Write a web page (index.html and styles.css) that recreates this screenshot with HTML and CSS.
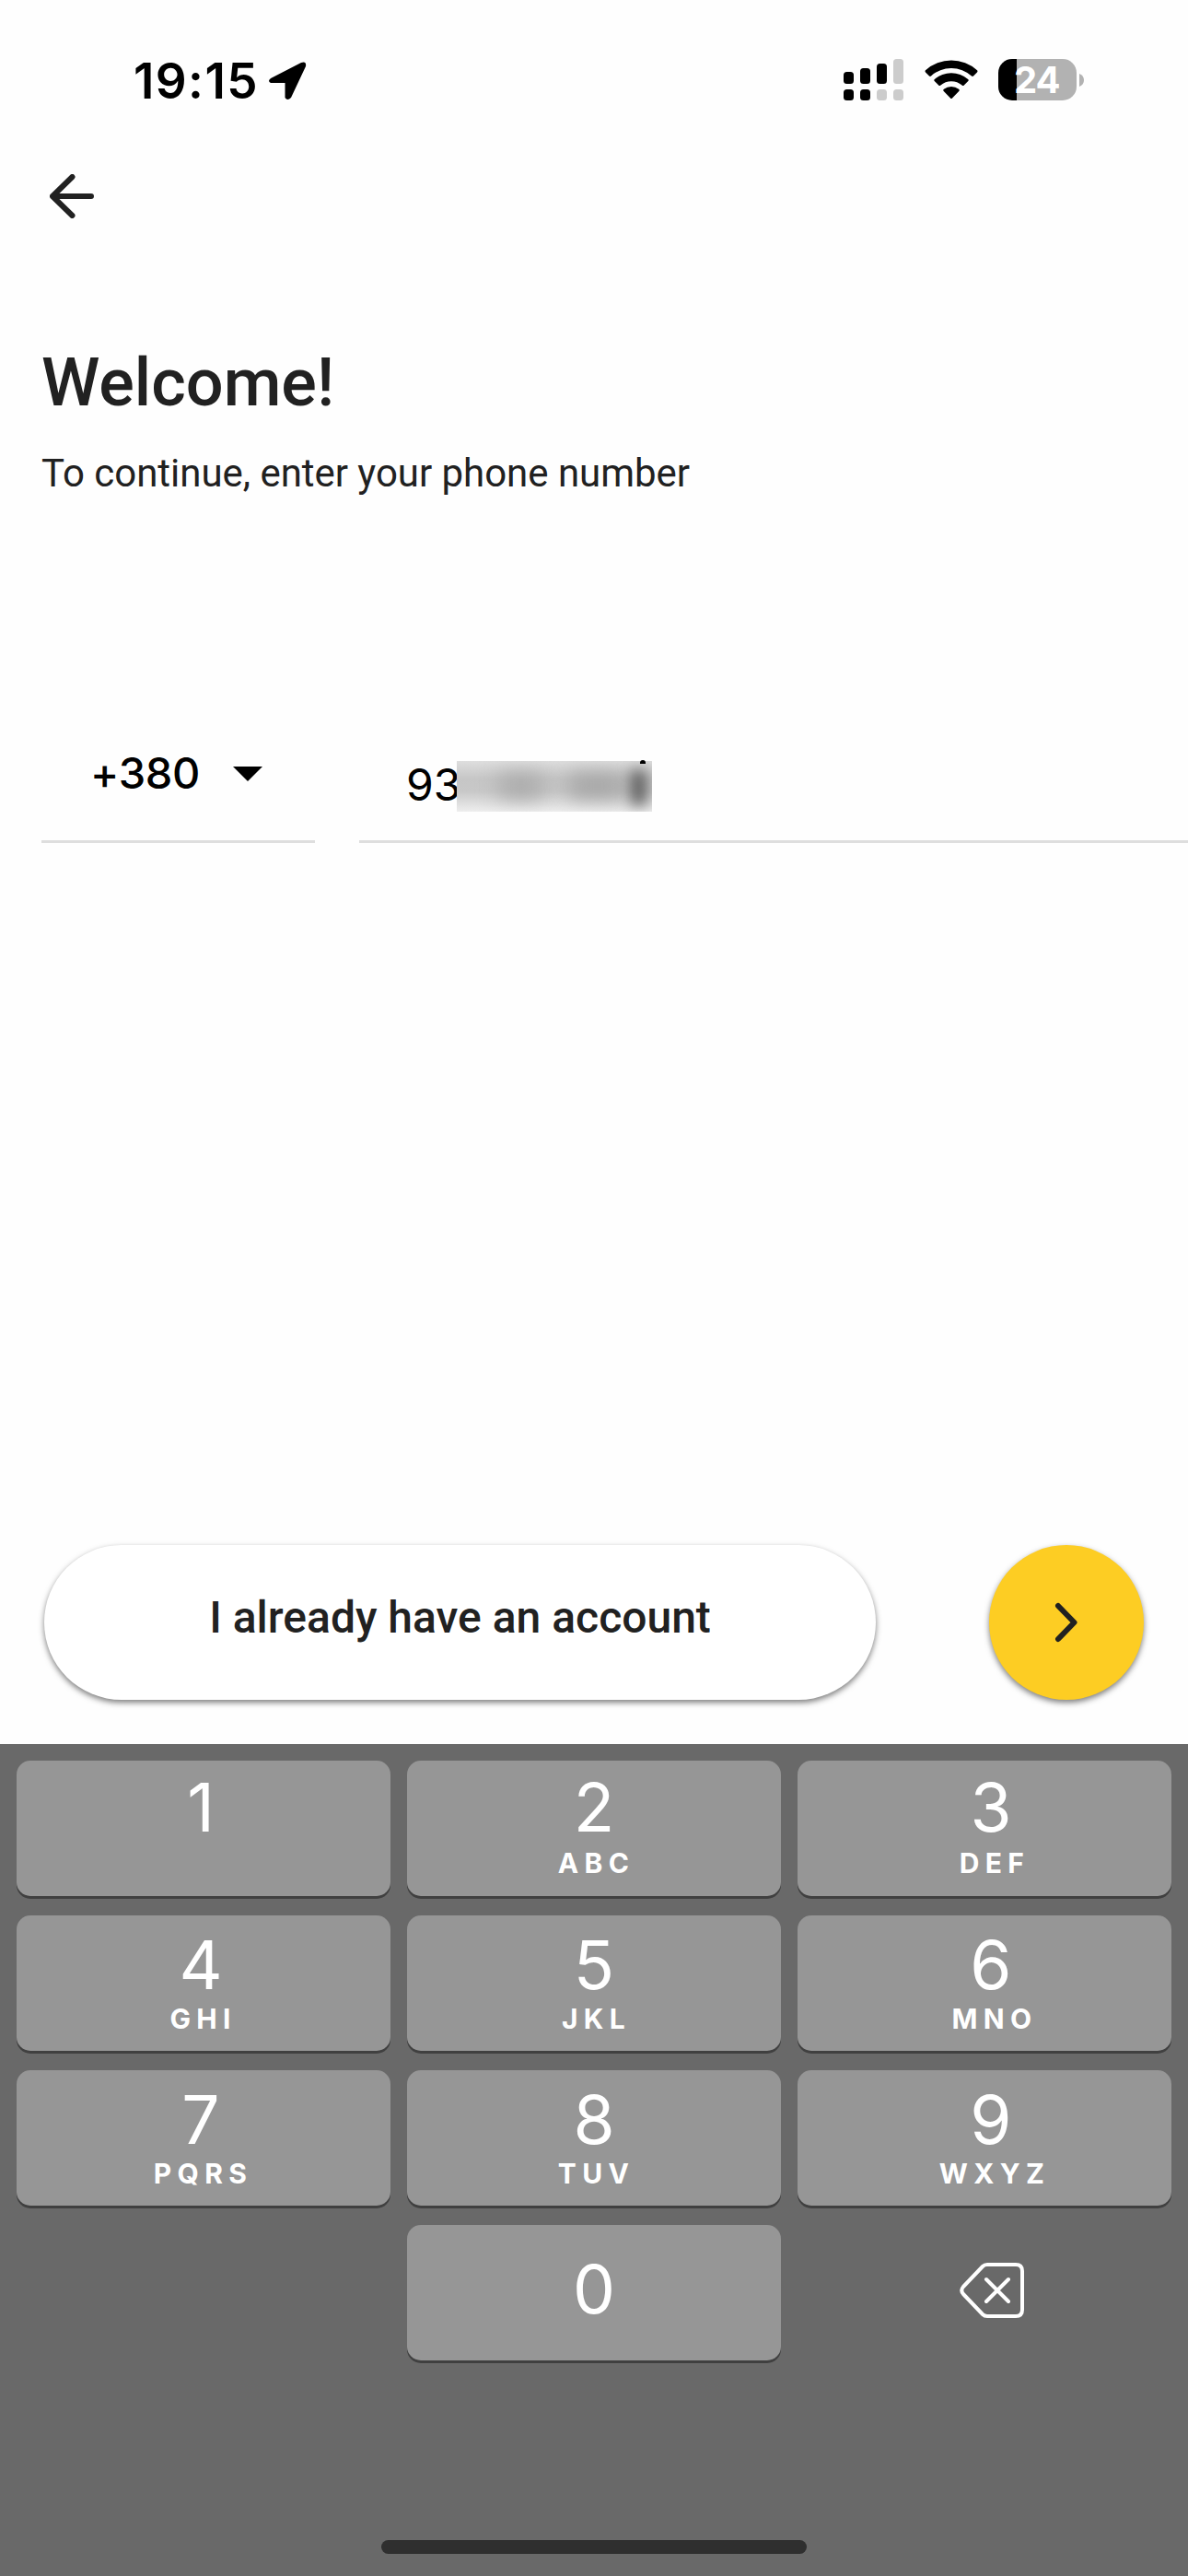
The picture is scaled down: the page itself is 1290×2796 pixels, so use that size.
FILE: index.html
```html
<!DOCTYPE html>
<html lang="en">
<head>
    <meta charset="UTF-8">
    <meta name="viewport" content="width=device-width, initial-scale=1.0">
    <title>Welcome</title>
    <link rel="stylesheet" href="styles.css">
</head>
<body>
    <div class="status-bar">
        <span class="time">19:15</span>
        <svg class="location" width="42" height="42" viewBox="0 0 42 42">
            <path d="M3 18 L36 1 Q42 -1 41 5 L25 39 Q21 43 18.5 39 L18.5 23 L3 23 Q-1 21 3 18 Z"/>
        </svg>
        <svg class="signal" width="65" height="45" viewBox="0 0 65 45">
            <rect x="0" y="14" width="11" height="13" rx="3.5"/>
            <rect x="18" y="10" width="11" height="17" rx="3.5"/>
            <rect x="36" y="5" width="11" height="22" rx="3.5"/>
            <rect class="off" x="54" y="0" width="11" height="27" rx="3.5"/>
            <rect x="0" y="33" width="11" height="12" rx="3.5"/>
            <rect x="18" y="33" width="11" height="12" rx="3.5"/>
            <rect class="off" x="36" y="33" width="11" height="12" rx="3.5"/>
            <rect class="off" x="54" y="33" width="11" height="12" rx="3.5"/>
        </svg>
        <svg class="wifi" width="58" height="43" viewBox="0 0 58 43">
            <path d="M1 13.500 Q0 12.300 1 11.300 A42 42 0 0 1 57 11.300 Q58 12.300 57 13.500 L53 17.500 Q52 18.300 51 17.500 A32.500 32.500 0 0 0 7 17.500 Q6 18.300 5 17.500 Z"/>
            <path d="M10.700 23 Q9.700 22 10.900 21 A27.500 27.500 0 0 1 47.100 21 Q48.300 22 47.300 23 L42.800 27.600 Q41.800 28.600 40.600 27.600 A18 18 0 0 0 17.400 27.600 Q16.200 28.600 15.200 27.600 Z"/>
            <path d="M20.500 33.800 Q19.600 32.700 20.900 31.800 A13.500 13.500 0 0 1 37.100 31.800 Q38.400 32.700 37.500 33.800 L30 41.500 Q29 42.500 28 41.500 Z"/>
        </svg>
        <div class="battery">24</div>
        <svg class="battery-tip" width="5" height="14" viewBox="0 0 5 14">
            <path d="M0 0 Q5 2 5 7 Q5 12 0 14 Z"/>
        </svg>
    </div>

    <div class="nav">
        <svg width="48" height="48" viewBox="0 0 48 48">
            <path d="M45 24 H3 M24.500 3 L3 24 L24.500 45"/>
        </svg>
    </div>

    <h1>Welcome!</h1>
    <p class="subtitle">To continue, enter your phone number</p>

    <div class="phone">
        <div class="code">
            <span>+380</span>
            <svg width="32" height="16" viewBox="0 0 32 16"><path d="M0 0 H32 L16 16 Z"/></svg>
        </div>
        <div class="number">
            <span>93</span>
            <!-- hidden part of the number -->
            <div class="hidden">
                <i class="smudge one"></i>
                <i class="smudge two"></i>
                <i class="smudge three"></i>
            </div>
            <i class="dot"></i>
        </div>
    </div>

    <div class="actions">
        <div class="account">I already have an account</div>
        <div class="next">
            <svg width="26" height="44" viewBox="0 0 26 44"><path d="M4 4 L21.500 22 L4 40"/></svg>
        </div>
    </div>

    <div class="keyboard">
        <div class="keys">
            <div class="key left top"><b>1</b></div>
            <div class="key top"><b>2</b><span>ABC</span></div>
            <div class="key right top"><b>3</b><span>DEF</span></div>
            <div class="key left"><b>4</b><span>GHI</span></div>
            <div class="key"><b>5</b><span>JKL</span></div>
            <div class="key right"><b>6</b><span>MNO</span></div>
            <div class="key left"><b>7</b><span>PQRS</span></div>
            <div class="key"><b>8</b><span>TUV</span></div>
            <div class="key right"><b>9</b><span>WXYZ</span></div>
            <div></div>
            <div class="key zero"><b>0</b></div>
            <div class="delete">
                <svg width="70" height="60" viewBox="0 0 70 60">
                    <path d="M30 2 H61 Q68 2 68 9 V51 Q68 58 61 58 H30 Q27 58 25 56 L4 34 Q0.500 30 4 26 L25 4 Q27 2 30 2 Z M29 18 L53 42 M53 18 L29 42"/>
                </svg>
            </div>
        </div>
        <div class="home"></div>
    </div>
</body>
</html>
```
FILE: styles.css
```css
* {
    box-sizing: border-box;
}

body {
    margin: 0;
    width: 1290px;
    height: 2796px;
    background-color: #fefefe;
    font-family: Roboto, sans-serif;
    color: #212121;
    overflow: hidden;
}

svg {
    display: block;
    flex: none;
}

.status-bar {
    display: flex;
    align-items: flex-start;
    height: 189px;
    padding: 58px 0 0 145px;
    font-family: Inter, sans-serif;
    color: black;
}

.time {
    width: 146px;
    font-size: 53px;
    font-weight: 600;
    line-height: 60px;
    letter-spacing: 1.4px;
    white-space: nowrap;
}

.location {
    margin-top: 9px;
}

.signal {
    margin: 6px 0 0 583px;
}

.signal .off {
    fill: #cccccc;
}

.wifi {
    margin: 7px 0 0 23px;
}

.battery {
    width: 85px;
    height: 45px;
    margin: 6px 0 0 22px;
    padding-left: 17px;
    border-radius: 15px;
    background: linear-gradient(to right, black 20px, #b2b2b2 20px);
    font-size: 40px;
    font-weight: 700;
    line-height: 45px;
    letter-spacing: -1px;
    color: white;
}

.battery-tip {
    margin: 22px 0 0 3px;
    fill: #b2b2b2;
}

.nav {
    height: 185px;
    padding-left: 54px;
}

.nav path, .next path, .delete path {
    fill: none;
    stroke: #212121;
    stroke-width: 6;
    stroke-linecap: round;
    stroke-linejoin: round;
}

h1 {
    margin: 0 0 31px 45px;
    font-size: 72px;
    font-weight: 500;
    line-height: 84px;
}

.subtitle {
    margin: 0 0 0 45px;
    font-size: 42px;
    line-height: 50px;
    letter-spacing: -0.03px;
}

.phone {
    display: flex;
    gap: 48px;
    height: 376px;
    margin-left: 45px;
    padding-top: 240px;
    font-family: Inter, sans-serif;
    font-size: 48px;
    line-height: 60px;
    color: black;
}

.code, .number {
    display: flex;
    border-bottom: 3px solid #dedede;
}

.code {
    width: 297px;
    padding: 30px 0 0 53px;
    font-size: 47px;
    font-weight: 500;
}

.code span {
    width: 155px;
    letter-spacing: -0.3px;
}

.code svg {
    margin-top: 23px;
}

.number {
    flex: 1;
    position: relative;
    padding: 43px 0 0 51px;
}

.number span {
    width: 55px;
    white-space: nowrap;
}

.hidden {
    position: relative;
    width: 212px;
    height: 55px;
    margin-top: 4px;
    overflow: hidden;
    background: linear-gradient(#dedede, #c6c6c6 35%, #c8c8c8 60%, #eeeeee);
}

.smudge {
    position: absolute;
    filter: blur(11px);
}

.one {
    left: 46px;
    top: 14px;
    width: 48px;
    height: 26px;
    background-color: #aaaaaa;
}

.two {
    left: 122px;
    top: 14px;
    width: 60px;
    height: 26px;
    background-color: #a4a4a4;
}

.three {
    left: 190px;
    top: 10px;
    width: 15px;
    height: 38px;
    background-color: #505050;
    filter: blur(8px);
}

.dot {
    position: absolute;
    left: 305px;
    top: 46px;
    width: 6px;
    height: 4px;
    border-radius: 3px 3px 0 0;
    background-color: black;
}

.actions {
    display: flex;
    justify-content: space-between;
    height: 978px;
    padding: 762px 48px 0;
}

.account, .next {
    height: 168px;
    border-radius: 84px;
    box-shadow: 0 3px 6px rgba(0, 0, 0, 0.5);
}

.account {
    width: 903px;
    padding-top: 49px;
    background-color: white;
    font-size: 48px;
    font-weight: 500;
    line-height: 60px;
    text-align: center;
}

.next {
    display: flex;
    align-items: center;
    justify-content: center;
    width: 168px;
    background-color: #fdcd23;
}

.keyboard {
    height: 903px;
    padding-top: 18px;
    background-color: #696969;
    font-family: Inter, sans-serif;
    color: white;
}

.keys {
    display: grid;
    grid-template-columns: 406px 406px 406px;
    grid-auto-rows: 147px;
    gap: 21px 18px;
    height: 846px;
    padding: 0 18px;
}

.key {
    display: flex;
    flex-direction: column;
    align-items: center;
    padding-top: 17px;
    border-radius: 15px;
    background-color: #969696;
    box-shadow: 0 3px 0 #404040;
}

.key b {
    font-size: 73px;
    font-weight: 400;
    line-height: 73px;
}

.key span {
    margin: 7px 0 0 5px;
    font-size: 30px;
    font-weight: 700;
    line-height: 30px;
    letter-spacing: 6.3px;
}

.key.top {
    padding-top: 14px;
}

.key.top span {
    margin-top: 9px;
}

.key.left {
    padding-right: 6px;
}

.key.right {
    padding-left: 14px;
}

.key.right span {
    margin-left: 8px;
}

.key.zero {
    padding-top: 33px;
}

.delete {
    padding: 41px 0 0 176px;
}

.delete path {
    stroke: white;
    stroke-width: 4;
}

.home {
    width: 462px;
    height: 15px;
    margin: 0 auto;
    border-radius: 8px;
    background-color: #2f2f2f;
}
```
